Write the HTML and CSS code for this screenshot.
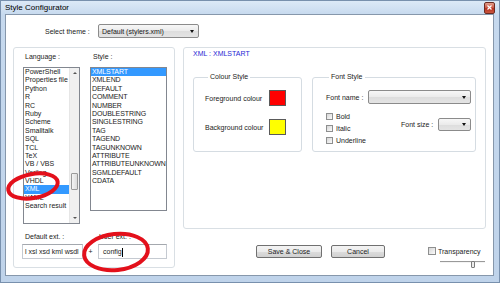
FILE: index.html
```html
<!DOCTYPE html>
<html lang="en">
<head>
  <meta charset="UTF-8">
  <title>Style Configurator</title>
  <link rel="stylesheet" href="styles.css">
</head>
<body>
  <div class="window">
    <div class="titlebar">
      <span class="title">Style Configurator</span>
      <span class="close-btn">
        <svg width="5" height="5" viewBox="0 0 5 5"><path d="M0.5 0.5 L4.5 4.5 M4.5 0.5 L0.5 4.5" stroke="#fff" stroke-width="1.2"/></svg>
      </span>
    </div>

    <div class="client">
      <div class="theme-row">
        <span class="theme-label">Select theme :</span>
        <div class="combo theme-combo"><span>Default (stylers.xml)</span><i class="arrow"></i></div>
      </div>

      <div class="main">
        <!-- Language / style lists -->
        <div class="lang-group">
          <div class="lists">
            <div class="lang-col">
              <div class="label">Language :</div>
              <div class="listbox lang-list">
                <ul class="items">
                  <li>PowerShell</li>
                  <li>Properties file</li>
                  <li>Python</li>
                  <li>R</li>
                  <li>RC</li>
                  <li>Ruby</li>
                  <li>Scheme</li>
                  <li>Smalltalk</li>
                  <li>SQL</li>
                  <li>TCL</li>
                  <li>TeX</li>
                  <li>VB / VBS</li>
                  <li>Verilog</li>
                  <li>VHDL</li>
                  <li class="selected">XML</li>
                  <li>YAML</li>
                  <li>Search result</li>
                </ul>
                <div class="scrollbar">
                  <div class="sb-btn"><i class="up"></i></div>
                  <div class="sb-track"><div class="sb-thumb"></div></div>
                  <div class="sb-btn"><i class="down"></i></div>
                </div>
              </div>
            </div>
            <div class="style-col">
              <div class="label">Style :</div>
              <ul class="listbox style-list">
                <li class="selected">XMLSTART</li>
                <li>XMLEND</li>
                <li>DEFAULT</li>
                <li>COMMENT</li>
                <li>NUMBER</li>
                <li>DOUBLESTRING</li>
                <li>SINGLESTRING</li>
                <li>TAG</li>
                <li>TAGEND</li>
                <li>TAGUNKNOWN</li>
                <li>ATTRIBUTE</li>
                <li>ATTRIBUTEUNKNOWN</li>
                <li>SGMLDEFAULT</li>
                <li>CDATA</li>
              </ul>
            </div>
          </div>

          <div class="ext">
            <div class="ext-labels">
              <span class="default-label">Default ext. :</span>
              <span class="user-label">User ext. :</span>
            </div>
            <div class="ext-inputs">
              <div class="textbox default-ext">l xsl xsd kml wsdl</div>
              <span class="plus">+</span>
              <div class="textbox user-ext">config<span class="caret"></span></div>
            </div>
          </div>
        </div>

        <!-- Style settings -->
        <div class="right">
          <div class="panel">
            <div class="style-title">XML : XMLSTART</div>
            <div class="groups">
              <fieldset class="colour-group">
                <legend>Colour Style</legend>
                <div class="colour-row">
                  <span class="colour-label">Foreground colour</span>
                  <span class="swatch red"></span>
                </div>
                <div class="colour-row">
                  <span class="colour-label">Background colour</span>
                  <span class="swatch yellow"></span>
                </div>
              </fieldset>

              <fieldset class="font-group">
                <legend>Font Style</legend>
                <div class="font-name-row">
                  <span class="font-name-label">Font name :</span>
                  <div class="combo font-combo"><i class="arrow"></i></div>
                </div>
                <div class="font-opts">
                  <div class="checks">
                    <div class="check-row"><span class="check"></span>Bold</div>
                    <div class="check-row"><span class="check"></span>Italic</div>
                    <div class="check-row"><span class="check"></span>Underline</div>
                  </div>
                  <div class="size-row">
                    <span class="size-label">Font size :</span>
                    <div class="combo size-combo"><i class="arrow"></i></div>
                  </div>
                </div>
              </fieldset>
            </div>
          </div>

          <div class="actions">
            <button class="btn save-btn">Save &amp; Close</button>
            <button class="btn cancel-btn">Cancel</button>
            <div class="transparency">
              <div class="check-row"><span class="check"></span>Transparency</div>
              <div class="slider">
                <div class="track"></div>
                <div class="thumb"></div>
              </div>
            </div>
          </div>
        </div>
      </div>
    </div>

    <!-- red annotation circles drawn over the dialog -->
    <svg class="marker marker-lang" width="60" height="36" viewBox="0 0 60 36">
      <ellipse cx="30" cy="18" rx="25" ry="12" transform="rotate(-10 30 18)" fill="none" stroke="#e3101b" stroke-width="4"/>
    </svg>
    <svg class="marker marker-ext" width="74" height="44" viewBox="0 0 74 44">
      <ellipse cx="37" cy="22" rx="32" ry="18" transform="rotate(-6 37 22)" fill="none" stroke="#e3101b" stroke-width="4"/>
    </svg>
  </div>
</body>
</html>
```

FILE: styles.css
```css
/* Basic reset */
* {
  margin: 0;
  padding: 0;
  box-sizing: border-box;
}

body {
  font-family: 'Liberation Sans', Arial, sans-serif;
  font-size: 7px;
  color: #1b1b1b;
  background: #c9dbef;
}

/* Window frame */
.window {
  position: relative;
  width: 500px;
  height: 283px;
  display: flex;
  flex-direction: column;
  background: linear-gradient(#dce9f7, #c6d9ee 14px, #bfd3ea);
  border: 1px solid #7890ad;
}

.titlebar {
  height: 13px;
  display: flex;
  align-items: center;
  padding-left: 4px;
  font-size: 8px;
  color: #000;
}

.close-btn {
  margin-left: auto;
  margin-right: 4px;
  width: 11px;
  height: 12px;
  display: flex;
  align-items: center;
  justify-content: center;
  background: linear-gradient(#e3a08e, #c9513f 50%, #b8301f 51%, #c9573f);
  border: 1px solid #6c2b22;
  border-radius: 2px;
}

/* Client area */
.client {
  margin-left: 4px;
  width: 489px;
  height: 262px;
  background: #fff;
  border: 1px solid #8697ab;
}

.theme-row {
  display: flex;
  align-items: center;
  height: 14px;
  margin-top: 9px;
  padding-left: 39px;
}

.theme-label {
  width: 53px;
}

.theme-combo {
  width: 101px;
}

/* Combo boxes */
.combo {
  display: flex;
  align-items: center;
  height: 14px;
  padding: 0 4px 0 3px;
  border: 1px solid #8b8b8b;
  border-radius: 2px;
  background: linear-gradient(#f7f7f7, #ebebeb 50%, #dddddd 51%, #e4e4e4);
}

.combo .arrow {
  margin-left: auto;
  width: 0;
  height: 0;
  border-left: 2.5px solid transparent;
  border-right: 2.5px solid transparent;
  border-top: 3px solid #111;
}

.main {
  display: flex;
  margin-top: 9px;
  height: 221px;
}

/* Left group */
.lang-group {
  margin-left: 7px;
  width: 162px;
  height: 221px;
  display: flex;
  flex-direction: column;
  padding: 5px 0 8px 8px;
  border: 1px solid #d9dfe4;
  border-radius: 3px;
}

.lists {
  display: flex;
}

.label {
  height: 8px;
  line-height: 8px;
  margin-bottom: 6px;
  padding-left: 3px;
}

.lang-col {
  width: 58px;
}

.style-col {
  width: 77px;
  margin-left: 10px;
}

.listbox {
  border: 1px solid #828790;
  background: #fff;
  list-style: none;
  overflow: hidden;
}

.listbox li,
.items li {
  list-style: none;
  height: 8.4px;
  line-height: 8.4px;
  padding-left: 1px;
  white-space: nowrap;
}

.selected {
  background: #3399ff;
  color: #fff;
}

.lang-list {
  display: flex;
  height: 157px;
  margin-left: 1px;
}

.items {
  flex: 1;
  overflow: hidden;
}

.style-list {
  height: 144px;
  letter-spacing: -0.1px;
}

/* Scrollbar */
.scrollbar {
  width: 10px;
  display: flex;
  flex-direction: column;
  background: #f0f0f0;
  border-left: 1px solid #e6e6e6;
}

.sb-btn {
  height: 10px;
  display: flex;
  align-items: center;
  justify-content: center;
}

.sb-btn i {
  width: 0;
  height: 0;
  border-left: 2px solid transparent;
  border-right: 2px solid transparent;
}

.sb-btn .up {
  border-bottom: 2px solid #555;
}

.sb-btn .down {
  border-top: 2px solid #555;
}

.sb-track {
  flex: 1;
}

.sb-thumb {
  margin: 95px 1px 0 1px;
  height: 17px;
  border: 1px solid #9a9a9a;
  border-radius: 1px;
  background: linear-gradient(90deg, #f4f4f4, #dcdcdc);
}

/* Extensions */
.ext {
  margin-top: auto;
}

.ext-labels {
  display: flex;
  height: 8px;
  line-height: 8px;
  margin-bottom: 3px;
}

.default-label {
  width: 77px;
  padding-left: 3px;
}

.ext-inputs {
  display: flex;
  align-items: center;
}

.textbox {
  height: 15px;
  line-height: 13px;
  padding-left: 2px;
  border: 1px solid #c5cad1;
  border-top-color: #a4a8ae;
  white-space: nowrap;
  overflow: hidden;
}

.default-ext {
  width: 61px;
}

.plus {
  width: 15px;
  text-align: center;
}

.user-ext {
  width: 69px;
  padding-left: 4px;
}

.caret {
  display: inline-block;
  width: 1px;
  height: 9px;
  background: #000;
  vertical-align: middle;
}

/* Right side */
.right {
  margin-left: 8px;
  width: 303px;
  display: flex;
  flex-direction: column;
}

.panel {
  height: 190px;
  padding: 2px 8px 0 9px;
  border: 1px solid #d9dfe4;
  border-radius: 3px;
}

.style-title {
  height: 8px;
  line-height: 8px;
  color: #2727d4;
}

.groups {
  display: flex;
  gap: 10px;
  margin-top: 15px;
}

fieldset {
  height: 79px;
  border: 1px solid #d5dce2;
  border-radius: 3px;
  min-width: 0;
}

legend {
  margin-left: 3px;
  padding: 0 2px;
  height: 8px;
  line-height: 8px;
}

.colour-group {
  width: 109px;
  padding: 9px 0 0 11px;
}

.colour-row {
  display: flex;
  align-items: center;
  height: 16px;
  margin-bottom: 13px;
}

.colour-label {
  width: 64px;
}

.swatch {
  width: 17px;
  height: 16px;
  border: 1px solid #5a5a5a;
}

.red {
  background: #ff0000;
}

.yellow {
  background: #ffff00;
}

.font-group {
  width: 164px;
  padding: 9px 4px 0 13px;
}

.font-name-row {
  display: flex;
  align-items: center;
}

.font-name-label {
  width: 42px;
}

.font-combo {
  width: 103px;
}

.font-opts {
  display: flex;
  margin-top: 6px;
}

.checks {
  display: flex;
  flex-direction: column;
}

.check-row {
  display: flex;
  align-items: center;
  height: 12px;
}

.check {
  width: 7px;
  height: 7px;
  margin-right: 3px;
  border: 1px solid #8e8f8f;
  background: linear-gradient(135deg, #d6d6d6, #fbfbfb);
}

.size-row {
  display: flex;
  align-items: center;
  margin-left: auto;
  margin-top: 8px;
  height: 13px;
}

.size-label {
  width: 37px;
}

.size-combo {
  width: 33px;
  height: 13px;
}

/* Bottom buttons */
.actions {
  display: flex;
  align-items: flex-start;
  margin-top: 16px;
}

.btn {
  height: 13px;
  font-family: inherit;
  font-size: 7px;
  color: #1b1b1b;
  border: 1px solid #707070;
  border-radius: 2px;
  background: linear-gradient(#f3f3f3, #ebebeb 50%, #dddddd 51%, #d0d0d0);
}

.save-btn {
  width: 66px;
  margin-left: 73px;
}

.cancel-btn {
  width: 54px;
  margin-left: 9px;
}

.transparency {
  margin-left: 43px;
}

.transparency .check {
  width: 8px;
  height: 8px;
  margin-right: 2px;
}

.slider {
  position: relative;
  width: 45px;
  height: 7px;
  margin: 4px 0 0 12px;
}

.track {
  margin-top: 3px;
  height: 2px;
  border-top: 1px solid #9a9a9a;
  border-bottom: 1px solid #f4f4f4;
}

.thumb {
  position: absolute;
  left: 31px;
  top: 0;
  width: 4px;
  height: 7px;
  border: 1px solid #7a7a7a;
  border-radius: 1px;
  background: #ececec;
}

/* Annotation markers */
.marker {
  position: absolute;
}

.marker-lang {
  left: 2px;
  top: 167px;
}

.marker-ext {
  left: 78px;
  top: 229px;
}
```
